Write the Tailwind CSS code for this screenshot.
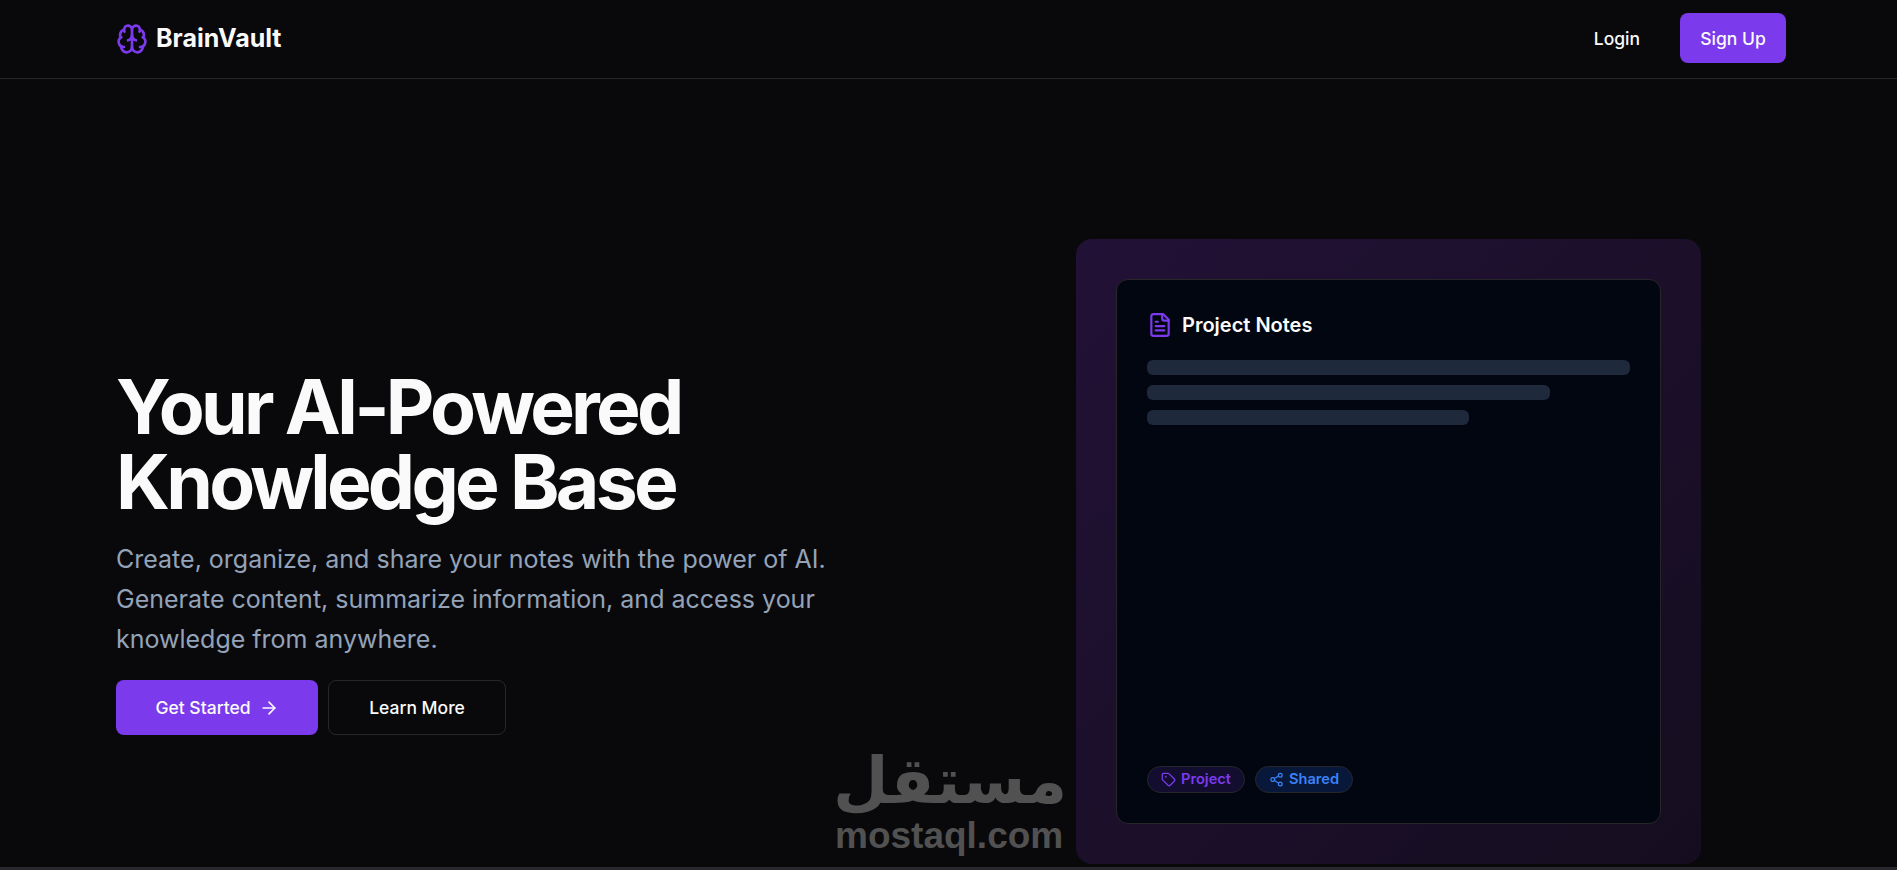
<!DOCTYPE html>
<html lang="en">

<head>
    <meta charset="UTF-8">
    <meta name="viewport" content="width=device-width, initial-scale=1.0">
    <title>BrainVault</title>
    <script src="https://cdn.jsdelivr.net/npm/@tailwindcss/browser@4"></script>
</head>

<body class="relative h-screen overflow-hidden bg-[#09090c] font-['Inter',sans-serif] text-[#fafafa]">
    <header class="h-[79px] border-b border-[#27272a]">
        <div class="flex h-[78px] items-center justify-between pl-[116px] pr-[111px]">
            <div class="flex items-center gap-2">
                <svg class="h-[32px] w-[32px] text-[#7c3aed]" viewBox="0 0 24 24" fill="none" stroke="currentColor" stroke-width="2" stroke-linecap="round" stroke-linejoin="round">
                    <path d="M12 18V5" />
                    <path d="M15 13a4.17 4.17 0 0 1-3-4 4.17 4.17 0 0 1-3 4" />
                    <path d="M17.598 6.5A3 3 0 1 0 12 5a3 3 0 1 0-5.598 1.5" />
                    <path d="M17.997 5.125a4 4 0 0 1 2.526 5.77" />
                    <path d="M18 18a4 4 0 0 0 2-7.464" />
                    <path d="M19.967 17.483A4 4 0 1 1 12 18a4 4 0 1 1-7.967-.517" />
                    <path d="M6 18a4 4 0 0 1-2-7.464" />
                    <path d="M6.003 5.125a4 4 0 0 0-2.526 5.77" />
                </svg>
                <span class="text-[25px] font-bold">BrainVault</span>
            </div>
            <nav class="flex items-center gap-5 pb-[2px]">
                <a class="flex h-[50px] items-center px-5 pt-[2px] text-[17.5px] font-medium">Login</a>
                <a class="flex h-[50px] w-[106px] items-center justify-center rounded-lg bg-[#7c3aed] pt-[2px] text-[17.5px] font-medium">Sign Up</a>
            </nav>
        </div>
    </header>

    <main class="grid grid-cols-[960px_625px] items-center pl-[116px] pt-[160px] pb-[3px]">
        <div>
            <h1 class="text-[75px] leading-[75px] font-bold tracking-[-0.05em]">Your AI-Powered<br>Knowledge Base</h1>
            <p class="mt-5 max-w-[760px] text-[25px] leading-10 text-[#94a3b8]">Create, organize, and share your notes with the power of AI. Generate content, summarize information, and access your knowledge from anywhere.</p>
            <div class="mt-[21px] flex gap-[10px]">
                <a class="flex h-[55px] w-[202px] items-center justify-center gap-2 rounded-lg bg-[#7c3aed] pt-[2px] text-[17.5px] font-medium">
                    Get Started
                    <svg class="h-5 w-5" viewBox="0 0 24 24" fill="none" stroke="currentColor" stroke-width="2" stroke-linecap="round" stroke-linejoin="round">
                        <path d="M5 12h14" />
                        <path d="m12 5 7 7-7 7" />
                    </svg>
                </a>
                <a class="flex h-[55px] w-[178px] items-center justify-center rounded-lg border border-[#27272a] pt-[2px] text-[17.5px] font-medium">Learn More</a>
            </div>
        </div>

        <div class="h-[625px] rounded-2xl bg-gradient-to-br from-[#221136] to-[#150d1f] p-10">
            <div class="flex h-full flex-col rounded-xl border border-[#27272a] bg-[#020610] px-[30px] pt-[31px] pb-[30px]">
                <div class="flex items-center gap-[9px]">
                    <svg class="h-[26px] w-[26px] text-[#7c3aed]" viewBox="0 0 24 24" fill="none" stroke="currentColor" stroke-width="2" stroke-linecap="round" stroke-linejoin="round">
                        <path d="M15 2H6a2 2 0 0 0-2 2v16a2 2 0 0 0 2 2h12a2 2 0 0 0 2-2V7Z" />
                        <path d="M14 2v4a2 2 0 0 0 2 2h4" />
                        <path d="M10 9H8" />
                        <path d="M16 13H8" />
                        <path d="M16 17H8" />
                    </svg>
                    <h2 class="text-xl font-semibold">Project Notes</h2>
                </div>
                <div class="mt-[21px] flex flex-col gap-[10px]">
                    <div class="h-[15px] w-full rounded-md bg-[#1e293b]"></div>
                    <div class="h-[15px] w-5/6 rounded-md bg-[#1e293b]"></div>
                    <div class="h-[15px] w-2/3 rounded-md bg-[#1e293b]"></div>
                </div>
                <div class="mt-auto flex gap-[10px]">
                    <span class="flex h-[27px] w-[98px] items-center justify-center gap-[5px] rounded-full border border-[#27272a] bg-[#7c3aed]/15 text-[14.6px] font-semibold text-[#7c3aed]">
                        <svg class="h-[15px] w-[15px]" viewBox="0 0 24 24" fill="none" stroke="currentColor" stroke-width="2" stroke-linecap="round" stroke-linejoin="round">
                            <path d="M12.586 2.586A2 2 0 0 0 11.172 2H4a2 2 0 0 0-2 2v7.172a2 2 0 0 0 .586 1.414l8.704 8.704a2.426 2.426 0 0 0 3.42 0l6.58-6.58a2.426 2.426 0 0 0 0-3.42z" />
                            <circle cx="7.5" cy="7.5" r=".5" fill="currentColor" />
                        </svg>
                        Project
                    </span>
                    <span class="flex h-[27px] w-[98px] items-center justify-center gap-[5px] rounded-full border border-[#27272a] bg-[#2563eb]/20 text-[14.6px] font-semibold text-[#3b82f6]">
                        <svg class="h-[15px] w-[15px]" viewBox="0 0 24 24" fill="none" stroke="currentColor" stroke-width="2" stroke-linecap="round" stroke-linejoin="round">
                            <circle cx="18" cy="5" r="3" />
                            <circle cx="6" cy="12" r="3" />
                            <circle cx="18" cy="19" r="3" />
                            <line x1="8.59" x2="15.42" y1="13.51" y2="17.49" />
                            <line x1="15.41" x2="8.59" y1="6.51" y2="10.49" />
                        </svg>
                        Shared
                    </span>
                </div>
            </div>
        </div>
    </main>

    <div class="h-[3px] bg-[#27292c]"></div>

    <!-- watermark -->
    <div class="absolute left-[835px] top-[742px] w-[228px] text-center text-[#515151]">
        <div dir="rtl" class="-mr-1 h-[78px] whitespace-nowrap font-['DejaVu_Sans',sans-serif] text-[64px] leading-[78px] font-bold">مستقل</div>
        <div class="font-['Liberation_Sans',sans-serif] text-[37px] leading-[32px] font-bold">mostaql.com</div>
    </div>
</body>

</html>
